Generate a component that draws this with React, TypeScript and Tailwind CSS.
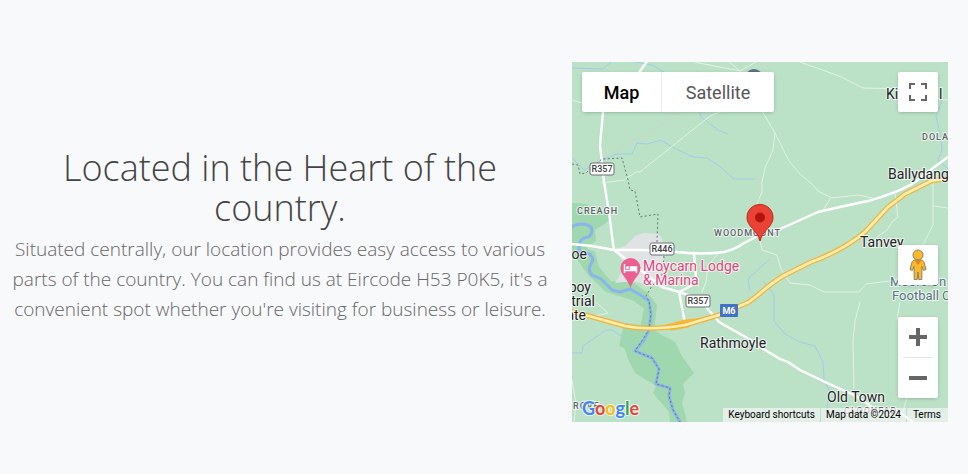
import React from "react";

const ROADS = [
  "M0 182 L20 184 L42 188 L70 188 L105 190 Q130 193 152 190 Q164 187 172 181 L188 173 L208 167 L246 150 L268 145 L296 139 Q328 130 343 120 L357 109 L376 95",
  "M76 -2 L66 12 L31 50 L28 83 L32 120 L37 150 L41 182 L42 188",
  "M42 188 L66 206 L90 225 L107 230 L125 236 L135 246 L147 260 L177 277 L193 288 L208 297 L216 300 L228 308 L253 320 L284 334 L303 347 L330 352 L345 363",
  "M122 191 L124 215 L119 224 L107 230 L113 261",
];

const LANES = [
  "M122 0 L168 9 L184 0 M168 9 L155 -2 M0 38 L10 41",
  "M30 121 L52 118 L64 110 L68 110 L98 86 L138 54 L150 49",
  "M190 49 L203 71 L217 99 L228 112 L240 122 L246 129 L260 136 L286 133 L300 136 M258 137 L250 150",
  "M203 71 L201 88 L193 106 L190 120 L190 130 L184 144",
  "M228 0 L267 14 L291 26 L335 27 L355 36 L376 38",
  "M323 131 L326 155 L320 160 L315 168 L305 175 M361 118 L361 144 L361 163 L352 181 L345 186 M361 144 L376 146",
  "M188 179 L190 188 L205 193 L209 207 L218 221 L238 223 L252 230 L287 230 L294 222 L318 219 L345 213",
  "M288 240 L283 259 L281 278 L282 326 M328 240 L325 257 M335 336 L330 352",
  "M146 192 L136 203 L134 220 L130 230",
  "M24 240 L36 251 L20 255 M0 318 L4 342 L2 360",
];

const STREAMS = [
  "M0 6 L31 7 L39 0 M52 -2 L80 3 L92 10 L126 43 M126 48 L130 56 L146 68 L156 72",
  "M0 96 L12 108 L28 100 L44 92 L60 92 L65 81 L75 82 L89 78 L100 85 L121 95 L135 96 L146 103 L162 117 L182 117",
  "M370 39 L364 54 L368 72 L370 88 L366 98 L376 107",
  "M192 220 L202 233 L202 259 L213 272 L228 280 L243 284 L251 300 L252 317 L258 330 L252 360",
  "M0 291 L10 291 L11 284 L34 268 L40 268 L51 275 L63 289",
  "M178 229 L176 217 L190 204 L198 197",
];

const MOTORWAY =
  "M-2 249 L17 254 L53 264 Q78 269 113 263 L147 253 L177 240 L186 233 Q202 219 213 213 L239 200 Q270 189 293 170 L316 145 L333 132 L359 119 L378 116";
const RIVER =
  "M0 165 Q3 162 9 162 Q19 162 20 168 Q20 173 16 175 Q8 176 7 184 L7 189 L17 192 Q23 196 19 202 Q15 208 20 213 L29 217 L40 228 L48 230 L58 227 L70 234 L77 239 L79 252 L77 268 L72 278 L63 289 L80 296 L87 307 L84 322 L98 326 L97 334 L101 348 L108 360";
const BORDER =
  "M0 102 L6 103 L8 112 L14 111 L18 107 L30 97 L50 96 L56 118 L58 128 L63 129 L68 155 L86 152 L85 180 L92 195 L90 213 L80 224 L74 234 L77 239 L79 252 L77 268 L63 289 L80 296 L87 307 L84 322 L98 326 L97 334 L101 348 L108 360";

function Shield({ x, y, label }: { x: number; y: number; label: string }) {
  return (
    <g>
      <rect x={x} y={y} width="24" height="12" rx="2" fill="#fff" stroke="#6b7074" />
      <text x={x + 12} y={y + 9} textAnchor="middle" className="text-[9px] font-medium" fill="#3c4043">
        {label}
      </text>
    </g>
  );
}

function MapDrawing() {
  const halo = { paintOrder: "stroke", stroke: "#ffffff", strokeWidth: 2, strokeOpacity: 0.75, strokeLinejoin: "round" } as const;
  return (
    <svg
      viewBox="0 0 376 360"
      preserveAspectRatio="xMidYMid slice"
      className="block h-full w-full font-['Roboto',sans-serif]"
      role="img"
      aria-label="Map of Woodmount"
    >
      <rect x="-400" y="-400" width="1200" height="1200" fill="#bbe2c6" />
      <g fill="#9fd7ae">
        <path d="M0 141 L14 142 L40 153 L34 161 L23 168 L24 179 L14 186 L23 190 L27 205 L39 219 L62 221 L76 231 L85 243 L82 268 L68 266 L72 246 L60 238 L34 230 L16 213 L0 190Z" />
        <path d="M52 261 L76 264 L88 272 L103 280 L110 294 L122 311 L111 322 L113 331 L110 341 L115 360 L98 360 L97 350 L81 331 L84 324 L63 311 L56 297 L53 287 L47 284Z" />
      </g>
      <path d="M42 188 L53 184 L63 174 L72 171 L86 172 L90 176 L91 190 L93 206 L98 223 L82 224 L61 219 L43 221 L54 203Z" fill="#dfe3e4" />
      <g fill="none" strokeLinejoin="round" strokeLinecap="round">
        <path d="M28 99 L108 51" stroke="#cbd5cd" />
        {STREAMS.map((d) => (
          <path key={d} d={d} stroke="#a2cbea" />
        ))}
        <path d={RIVER} stroke="#8ab4f0" strokeWidth="3" />
        {LANES.map((d) => (
          <path key={d} d={d} stroke="#e2f2e5" />
        ))}
        {ROADS.map((d) => (
          <path key={d} d={d} stroke="#fff" strokeWidth="2.4" />
        ))}
        <path d={BORDER} stroke="#66756d" strokeDasharray="2 2.4" strokeLinecap="butt" />
        <path d="M88 266 L113 259 L132 257 M100 267 L116 264" stroke="#f3b93c" strokeWidth="3" />
        <path d={MOTORWAY} stroke="#f3b32f" strokeWidth="5" />
        <path d={MOTORWAY} stroke="#ffedb5" strokeWidth="2.6" />
      </g>
      <circle cx="182" cy="16" r="9" fill="#5c7080" />

      <g className="text-[14px]" fill="#202124" {...halo}>
        <text x="314" y="37">Ki</text>
        <text x="367" y="37">l</text>
        <text x="316" y="117">Ballydang</text>
        <text x="288" y="185">Tanvey</text>
        <text x="128" y="286">Rathmoyle</text>
        <text x="255" y="340">Old Town</text>
        <text x="15" y="197" textAnchor="end">oe</text>
        <text x="19" y="230" textAnchor="end">boy</text>
        <text x="23" y="244" textAnchor="end">trial</text>
        <text x="14" y="258" textAnchor="end">ate</text>
      </g>
      <g className="text-[9px] font-medium tracking-[1px]" fill="#5b6166" {...halo}>
        <text x="5" y="152">CREAGH</text>
        <text x="142" y="174">WOODMOUNT</text>
        <text x="350" y="78">DOLA</text>
        <text x="1" y="347">ROVE</text>
        <text x="272" y="352">CLOONFAD</text>
      </g>
      <g className="text-[13px]" fill="#55747f" {...halo}>
        <text x="318" y="224">Moore Un</text>
        <text x="320" y="238">Football C</text>
      </g>
      <g className="text-[14px]" fill="#e0457f" {...halo}>
        <text x="71" y="223">&amp; Marina</text>
        <text x="71" y="209">Moycarn Lodge</text>
      </g>
      <Shield x={18} y={101} label="R357" />
      <Shield x={78} y={181} label="R446" />
      <Shield x={114} y={233} label="R357" />
      <rect x="148" y="242" width="18" height="13" rx="1" fill="#4274c4" />
      <text x="157" y="252" textAnchor="middle" className="text-[9px] font-bold" fill="#fff">
        M6
      </text>

      <path d="M58.500 196 a10 10 0 0 1 10 10 c0 7 -7 10 -10 20 c-3 -10 -10 -13 -10 -20 a10 10 0 0 1 10 -10Z" fill="#ec5f91" />
      <path d="M52.500 202 v9 M52.500 208.500 h12 v2.500 M64.500 208 v-3 h-6 v3" fill="none" stroke="#fff" strokeWidth="1.500" />
      <path d="M58.500 205 h5 a1 1 0 0 1 1 1 v2.500 h-6Z" fill="#fff" />
      <circle cx="55.500" cy="205.500" r="1.500" fill="#fff" />

      <path d="M188 142.500 c7.500 0 13 5.800 13 13 c0 9.500 -10 12 -13 23.500 c-3 -11.500 -13 -14 -13 -23.500 c0 -7.200 5.500 -13 13 -13Z" fill="#ea4335" stroke="#c5221f" />
      <circle cx="188" cy="155.500" r="5" fill="#b31412" />
    </svg>
  );
}

function Pegman() {
  return (
    <svg width="18" height="32" viewBox="0 0 18 32" aria-hidden="true">
      <path
        d="M5.500 11 L12.500 11 C14.500 11.500 15 13 15.500 15 L17 20.500 L14.700 21.500 L13 17.500 L12.800 30.500 L9.800 30.500 L9 23 L8.200 30.500 L5.200 30.500 L5 17.500 L3.300 21.500 L1 20.500 L2.500 15 C3 13 3.500 11.500 5.500 11Z"
        fill="#fbb829"
        stroke="#80776a"
        strokeWidth=".9"
      />
      <path d="M5 11 h8 l-4 5Z" fill="#e58a1f" />
      <circle cx="9" cy="6" r="5" fill="#fbb829" stroke="#80776a" strokeWidth=".9" />
    </svg>
  );
}

const control = "bg-white shadow-[0_1px_4px_-1px_rgba(0,0,0,0.3)]";

export default function App() {
  return (
    <main className="bg-[#f8f9fb]">
      <section className="grid min-h-screen grid-cols-[68fr_47fr] items-center gap-5 py-12 pr-5 pl-2">
        <div className="pb-0.5 text-center font-['Open_Sans','Noto_Sans',sans-serif] font-light">
          <h1 className="text-[36px] leading-10 text-[#444]">Located in the Heart of the country.</h1>
          <p className="pt-1.5 text-[19px] leading-[30px] text-[#666]">
            Situated centrally, our location provides easy access to various parts of the country. You can find us at
            Eircode H53 P0K5, it's a convenient spot whether you're visiting for business or leisure.
          </p>
        </div>

        <div className="relative mt-2.5 h-[360px] overflow-hidden font-['Roboto',sans-serif]">
          <MapDrawing />

          <div className={`absolute top-2.5 left-2.5 flex h-10 rounded-xs text-[18px] ${control}`}>
            <button type="button" className="w-20 border-r border-[#ececec] font-medium text-black">
              Map
            </button>
            <button type="button" className="w-28 text-[#565656]">
              Satellite
            </button>
          </div>

          <button
            type="button"
            aria-label="Toggle fullscreen view"
            className={`absolute top-2.5 right-2.5 flex size-10 items-center justify-center rounded-xs ${control}`}
          >
            <svg width="18" height="18" viewBox="0 0 18 18" fill="none" stroke="#666" strokeWidth="2" aria-hidden="true">
              <path d="M1 6V1h5M12 1h5v5M17 12v5h-5M6 17H1v-5" />
            </svg>
          </button>

          <div className="absolute right-2.5 bottom-6 flex flex-col gap-8">
            <button
              type="button"
              aria-label="Street View"
              className={`flex size-10 items-center justify-center rounded-xs ${control}`}
            >
              <Pegman />
            </button>
            <div className={`flex w-10 flex-col items-center rounded-xs ${control}`}>
              <button type="button" aria-label="Zoom in" className="flex size-10 items-center justify-center">
                <svg width="18" height="18" viewBox="0 0 18 18" stroke="#666" strokeWidth="4" aria-hidden="true">
                  <path d="M0 9h18M9 0v18" />
                </svg>
              </button>
              <div className="h-px w-[30px] bg-[#e6e6e6]" />
              <button type="button" aria-label="Zoom out" className="flex size-10 items-center justify-center">
                <svg width="18" height="18" viewBox="0 0 18 18" stroke="#666" strokeWidth="4" aria-hidden="true">
                  <path d="M0 9h18" />
                </svg>
              </button>
            </div>
          </div>

          <a
            href="#map"
            aria-label="Google"
            className="absolute bottom-0 left-2.5 font-['Lato',sans-serif] text-[18px] leading-7 font-bold [paint-order:stroke] [-webkit-text-stroke:2px_#ffffffb3]"
          >
            <span className="text-[#4285f4]">G</span>
            <span className="text-[#ea4335]">o</span>
            <span className="text-[#fbbc04]">o</span>
            <span className="text-[#4285f4]">g</span>
            <span className="text-[#34a853]">l</span>
            <span className="text-[#ea4335]">e</span>
          </a>

          <div className="absolute right-0 bottom-0 flex gap-px text-[10px] leading-[14px] whitespace-nowrap text-black">
            <button type="button" className="bg-[#f5f5f5]/70 px-[5px]">
              Keyboard shortcuts
            </button>
            <span className="bg-[#f5f5f5]/70 px-[5px]">Map data ©2024</span>
            <a href="#terms" className="bg-[#f5f5f5]/70 pr-[7px] pl-1.5">
              Terms
            </a>
          </div>
        </div>
      </section>
    </main>
  );
}
